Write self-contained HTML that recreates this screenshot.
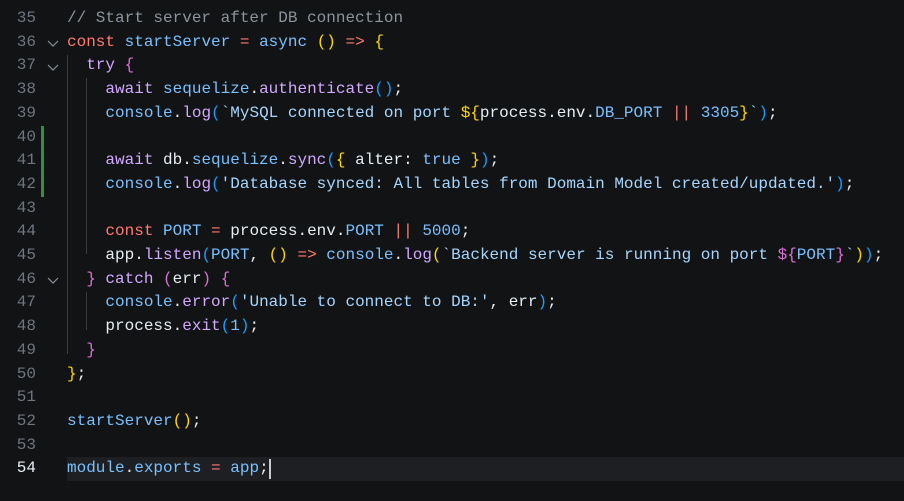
<!DOCTYPE html>
<html><head><meta charset="utf-8"><style>
html,body{margin:0;padding:0;width:904px;height:501px;overflow:hidden;background:#121314;}
.ed{position:relative;width:904px;height:501px;font-family:"Liberation Mono",monospace;font-size:16px;}
.l{position:absolute;left:0;height:23.7px;line-height:23.7px;width:904px;white-space:pre;}
.n{position:absolute;left:0;width:36px;text-align:right;color:#6e7681;}
.c{position:absolute;left:67px;color:#e6edf3;}
.cur{background:#1e1f22;}
.k{color:#ff7b72}.p{color:#d2a8ff}.b{color:#79c0ff}.s{color:#a5d6ff}.cm{color:#8b949e}.w{color:#e6edf3}
.y{color:#ffd700}.m{color:#da70d6}.lb{color:#179fff}
.g{position:absolute;left:41px;width:3px;background:#3fb950;opacity:.75}
.ig{position:absolute;width:1px;background:#3a3b3e}
.chev{position:absolute;left:47px;width:12px;height:12px}
</style></head><body><div class="ed">
<div class="ig" style="left:67px;top:55px;height:299px"></div>
<div class="ig" style="left:86px;top:78px;height:176px"></div>
<div class="ig" style="left:86px;top:292px;height:38px"></div>
<div class="g" style="top:126px;height:71px"></div>
<svg class="chev" style="top:37px" viewBox="0 0 12 12"><path d="M1 4l5 5 5-5" fill="none" stroke="#8b949e" stroke-width="1.2"/></svg>
<svg class="chev" style="top:61px" viewBox="0 0 12 12"><path d="M1 4l5 5 5-5" fill="none" stroke="#8b949e" stroke-width="1.2"/></svg>
<svg class="chev" style="top:274px" viewBox="0 0 12 12"><path d="M1 4l5 5 5-5" fill="none" stroke="#8b949e" stroke-width="1.2"/></svg>

<div class="l" style="top:7px"><span class="n">35</span><span class="c cm">// Start server after DB connection</span></div>
<div class="l" style="top:30.7px"><span class="n">36</span><span class="c"><span class="k">const</span> <span class="b">startServer</span> <span class="k">=</span> <span class="b">async</span> <span class="y">()</span> <span class="k">=&gt;</span> <span class="y">{</span></span></div>
<div class="l" style="top:54.4px"><span class="n">37</span><span class="c">  <span class="p">try</span> <span class="m">{</span></span></div>
<div class="l" style="top:78.1px"><span class="n">38</span><span class="c">    <span class="p">await</span> <span class="b">sequelize</span>.<span class="p">authenticate</span><span class="lb">()</span>;</span></div>
<div class="l" style="top:101.8px"><span class="n">39</span><span class="c">    <span class="b">console</span>.<span class="p">log</span><span class="lb">(</span><span class="s">`MySQL connected on port </span><span class="y">${</span><span class="w">process.env.</span><span class="b">DB_PORT</span> <span class="k">||</span> <span class="b">3305</span><span class="y">}</span><span class="s">`</span><span class="lb">)</span>;</span></div>
<div class="l" style="top:125.5px"><span class="n">40</span></div>
<div class="l" style="top:149.2px"><span class="n">41</span><span class="c">    <span class="p">await</span> <span class="w">db</span>.<span class="b">sequelize</span>.<span class="p">sync</span><span class="lb">(</span><span class="y">{</span> <span class="w">alter</span>: <span class="b">true</span> <span class="y">}</span><span class="lb">)</span>;</span></div>
<div class="l" style="top:172.9px"><span class="n">42</span><span class="c">    <span class="b">console</span>.<span class="p">log</span><span class="lb">(</span><span class="s">'Database synced: All tables from Domain Model created/updated.'</span><span class="lb">)</span>;</span></div>
<div class="l" style="top:196.6px"><span class="n">43</span></div>
<div class="l" style="top:220.3px"><span class="n">44</span><span class="c">    <span class="k">const</span> <span class="b">PORT</span> <span class="k">=</span> <span class="w">process.env.</span><span class="b">PORT</span> <span class="k">||</span> <span class="b">5000</span>;</span></div>
<div class="l" style="top:244px"><span class="n">45</span><span class="c">    <span class="w">app</span>.<span class="p">listen</span><span class="lb">(</span><span class="b">PORT</span>, <span class="y">()</span> <span class="k">=&gt;</span> <span class="b">console</span>.<span class="p">log</span><span class="y">(</span><span class="s">`Backend server is running on port </span><span class="m">${</span><span class="b">PORT</span><span class="m">}</span><span class="s">`</span><span class="y">)</span><span class="lb">)</span>;</span></div>
<div class="l" style="top:267.7px"><span class="n">46</span><span class="c">  <span class="m">}</span> <span class="p">catch</span> <span class="m">(</span><span class="w">err</span><span class="m">)</span> <span class="m">{</span></span></div>
<div class="l" style="top:291.4px"><span class="n">47</span><span class="c">    <span class="b">console</span>.<span class="p">error</span><span class="lb">(</span><span class="s">'Unable to connect to DB:'</span>, <span class="w">err</span><span class="lb">)</span>;</span></div>
<div class="l" style="top:315.1px"><span class="n">48</span><span class="c">    <span class="w">process</span>.<span class="p">exit</span><span class="lb">(</span><span class="b">1</span><span class="lb">)</span>;</span></div>
<div class="l" style="top:338.8px"><span class="n">49</span><span class="c">  <span class="m">}</span></span></div>
<div class="l" style="top:362.5px"><span class="n">50</span><span class="c"><span class="y">}</span>;</span></div>
<div class="l" style="top:386.2px"><span class="n">51</span></div>
<div class="l" style="top:409.9px"><span class="n">52</span><span class="c"><span class="b">startServer</span><span class="y">()</span>;</span></div>
<div class="l" style="top:433.6px"><span class="n">53</span></div>
<div class="l" style="top:457.3px"><div class="cur" style="position:absolute;left:67px;top:0;width:837px;height:23.7px"></div><span class="n" style="color:#e6edf3">54</span><span class="c"><span class="b">module</span>.<span class="b">exports</span> <span class="k">=</span> <span class="b">app</span>;</span><div style="position:absolute;left:269px;top:2px;width:2px;height:20px;background:#cccccc"></div></div>
</div></body></html>
